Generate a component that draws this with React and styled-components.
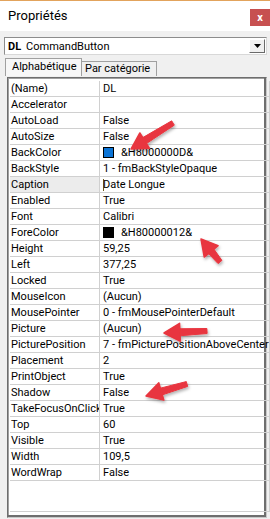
import React from 'react';
import styled, { createGlobalStyle } from 'styled-components';

const GlobalStyle = createGlobalStyle`
    html, body {
        margin: 0;
        padding: 0;
        background: #f0f0f0;
    }
    body {
        font-family: Roboto, "Liberation Sans", sans-serif;
        color: #000;
    }
`;

const Window = styled.div`
    position: relative;
    width: 270px;
    height: 519px;
    box-sizing: border-box;
    border-top: 1px solid #e2a35c;
    background: #f0f0f0;
    display: flex;
    flex-direction: column;
    overflow: hidden;
`;

const TitleBar = styled.div`
    height: 30px;
    flex-shrink: 0;
    background: #fff;
    display: flex;
    justify-content: space-between;
    align-items: flex-start;
`;

const Title = styled.div`
    padding: 6px 0 0 8px;
    font-size: 13px;
    line-height: 18px;
`;

const CloseButton = styled.div`
    margin-top: 8px;
    width: 20px;
    height: 17px;
    background: #c75050;
    color: #fff;
    font-size: 11px;
    font-weight: bold;
    line-height: 17px;
    text-align: center;
`;

const Body = styled.div`
    flex: 1;
    display: flex;
    flex-direction: column;
    padding: 6px 3px 1px 4px;
    min-height: 0;
`;

const Combo = styled.div`
    height: 18px;
    box-sizing: border-box;
    border: 1px solid #8c8c8c;
    border-right-color: #d8d8d8;
    border-bottom-color: #d8d8d8;
    background: #fff;
    display: flex;
    align-items: center;
    font-size: 11px;
    padding-left: 3px;
`;

const ComboName = styled.span`
    font-weight: bold;
    margin-right: 5px;
`;

const ComboType = styled.span`
    flex: 1;
`;

const DropButton = styled.div`
    width: 16px;
    height: 14px;
    margin-right: 1px;
    box-sizing: border-box;
    border: 1px solid #fff;
    border-right-color: #6a6a6a;
    border-bottom-color: #6a6a6a;
    background: #f0f0f0;
    display: flex;
    align-items: center;
    justify-content: center;
`;

const TabRow = styled.div`
    display: flex;
    align-items: flex-end;
    height: 18px;
    margin-top: 3px;
    padding-left: 1px;
`;

const Tab = styled.div`
    box-sizing: border-box;
    height: ${p => (p.active ? '18px' : '15px')};
    width: ${p => p.w}px;
    padding-left: ${p => (p.active ? '6px' : '3px')};
    border: 1px solid #a0a0a0;
    border-bottom: none;
    border-left: ${p => (p.active ? '1px solid #a0a0a0' : 'none')};
    background: ${p => (p.active ? '#f7f7f7' : '#f0f0f0')};
    font-size: 11px;
    line-height: ${p => (p.active ? '16px' : '14px')};
    white-space: nowrap;
`;

const Panel = styled.div`
    flex: 1;
    margin: 1px 0 0 3px;
    box-sizing: border-box;
    border: 1px solid #c8c8c8;
    border-left-color: #6e6e6e;
    border-top-color: #6e6e6e;
    box-shadow: inset -2px -2px 0 #6e6e6e, inset 1px 1px 0 #a0a0a0;
    background: #fff;
    padding: 3px 5px 5px 2px;
    display: flex;
`;

const Grid = styled.div`
    flex: 1;
    border-right: 1px solid #d0d0d0;
    border-bottom: 1px solid #d0d0d0;
`;

const Row = styled.div`
    display: flex;
    height: 16px;
    box-sizing: border-box;
    border-bottom: 1px solid #d0d0d0;
    font-size: 11px;
    line-height: 15px;
`;

const NameCell = styled.div`
    width: 88px;
    flex-shrink: 0;
    padding-left: 1px;
    border-right: 1px solid #d0d0d0;
    background: ${p => (p.selected ? '#ececec' : '#fff')};
    white-space: nowrap;
    overflow: hidden;
`;

const ValueCell = styled.div`
    flex: 1;
    padding-left: 3px;
    white-space: nowrap;
    overflow: hidden;
    display: flex;
    align-items: center;
`;

const Swatch = styled.span`
    width: 11px;
    height: 11px;
    box-sizing: border-box;
    border: 1px solid #000;
    background: ${p => p.color};
    margin: 0 7px 0 0;
    flex-shrink: 0;
`;

const Caret = styled.span`
    display: inline-block;
    width: 1px;
    height: 12px;
    background: #6b5a1c;
    margin-right: -1px;
`;

const Overlay = styled.svg`
    position: absolute;
    left: 0;
    top: 0;
    pointer-events: none;
`;

const rows = [
    ['(Name)', 'DL'],
    ['Accelerator', ''],
    ['AutoLoad', 'False'],
    ['AutoSize', 'False'],
    ['BackColor', '&H8000000D&', '#0b74d6'],
    ['BackStyle', '1 - fmBackStyleOpaque'],
    ['Caption', 'Date Longue'],
    ['Enabled', 'True'],
    ['Font', 'Calibri'],
    ['ForeColor', '&H80000012&', '#000'],
    ['Height', '59,25'],
    ['Left', '377,25'],
    ['Locked', 'True'],
    ['MouseIcon', '(Aucun)'],
    ['MousePointer', '0 - fmMousePointerDefault'],
    ['Picture', '(Aucun)'],
    ['PicturePosition', '7 - fmPicturePositionAboveCenter'],
    ['Placement', '2'],
    ['PrintObject', 'True'],
    ['Shadow', 'False'],
    ['TakeFocusOnClick', 'True'],
    ['Top', '60'],
    ['Visible', 'True'],
    ['Width', '109,5'],
    ['WordWrap', 'False'],
];

const arrows = [
    [173, 122, 131, 148],
    [220, 261, 201, 238],
    [207, 330, 164, 332],
    [187, 383, 146, 395],
];

const Arrow = ({ x1, y1, x2, y2 }) => {
    const dx = x2 - x1;
    const dy = y2 - y1;
    const len = Math.hypot(dx, dy);
    const ux = dx / len;
    const uy = dy / len;
    const head = 16;
    const hw = 9;
    const bx = x2 - ux * head;
    const by = y2 - uy * head;
    const px = -uy;
    const py = ux;
    const tail = `${x1 + px * 2.5},${y1 + py * 2.5} ${bx + px * 3.5},${by + py * 3.5} ${bx - px * 3.5},${by - py * 3.5} ${x1 - px * 2.5},${y1 - py * 2.5}`;
    return (
        <g filter="url(#shadow)">
            <polygon points={tail} fill="#e8363f" strokeLinejoin="round" stroke="#e8363f" strokeWidth="1" />
            <polygon
                points={`${x2},${y2} ${bx + px * hw},${by + py * hw} ${bx - px * hw},${by - py * hw}`}
                fill="#e8363f"
                stroke="#e8363f"
                strokeLinejoin="round"
                strokeWidth="1.5"
            />
        </g>
    );
};

const App = () => {
    return (
        <Window>
            <GlobalStyle />
            <TitleBar>
                <Title>Propriétés</Title>
                <CloseButton>x</CloseButton>
            </TitleBar>
            <Body>
                <Combo>
                    <ComboName>DL</ComboName>
                    <ComboType>CommandButton</ComboType>
                    <DropButton>
                        <svg width="7" height="4" viewBox="0 0 7 4">
                            <path d="M0 0h7L3.5 4z" fill="#000" />
                        </svg>
                    </DropButton>
                </Combo>
                <TabRow>
                    <Tab active w={77}>Alphabétique</Tab>
                    <Tab w={75}>Par catégorie</Tab>
                </TabRow>
                <Panel>
                    <Grid>
                        {rows.map(([name, value, swatch]) => (
                            <Row key={name}>
                                <NameCell selected={name === 'Caption'}>{name}</NameCell>
                                <ValueCell>
                                    {swatch && <Swatch color={swatch} />}
                                    {name === 'Caption' && <Caret />}
                                    {value}
                                </ValueCell>
                            </Row>
                        ))}
                    </Grid>
                </Panel>
            </Body>
            <Overlay width="270" height="519">
                <defs>
                    <filter id="shadow" x="-30%" y="-30%" width="160%" height="160%">
                        <feDropShadow dx="1" dy="2" stdDeviation="1.5" floodColor="#000" floodOpacity="0.3" />
                    </filter>
                </defs>
                {arrows.map(([x1, y1, x2, y2], i) => (
                    <Arrow key={i} x1={x1} y1={y1} x2={x2} y2={y2} />
                ))}
            </Overlay>
        </Window>
    );
};

export default App;
